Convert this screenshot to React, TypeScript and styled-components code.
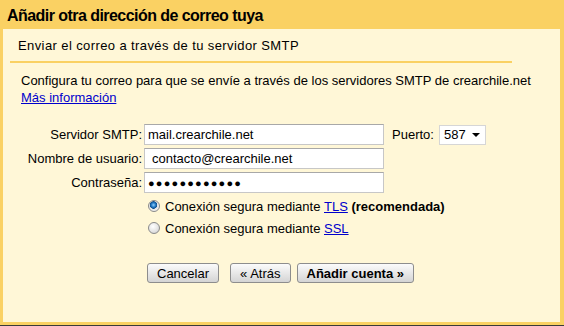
import styled, { createGlobalStyle } from "styled-components";

const Global = createGlobalStyle`
  html, body {
    margin: 0;
    padding: 0;
    background: #fff;
  }
  body {
    font-family: "Liberation Sans", Arial, sans-serif;
    font-size: 13px;
    color: #000;
  }
`;

const fields = [
  { label: "Servidor SMTP:", value: "mail.crearchile.net", indent: 3 },
  { label: "Nombre de usuario:", value: "contacto@crearchile.net", indent: 7 },
  { label: "Contraseña:", value: "●●●●●●●●●●●●", indent: 3, secret: true },
];

const App = () => {
  return (
    <Frame>
      <Global />
      <Title>Añadir otra dirección de correo tuya</Title>
      <Panel>
        <SubHeader>
          <SubTitle>Enviar el correo a través de tu servidor SMTP</SubTitle>
        </SubHeader>

        <Intro>
          Configura tu correo para que se envíe a través de los servidores SMTP de crearchile.net
          <br />
          <Link href="#">Más información</Link>
        </Intro>

        <Form>
          {fields.map((f, i) => (
            <Row key={f.label}>
              <Label>{f.label}</Label>
              <Field $indent={f.indent} $secret={f.secret}>
                {f.value}
              </Field>
              {i === 0 && (
                <Port>
                  <span>Puerto:</span>
                  <Select>
                    587
                    <svg width="8" height="4" viewBox="0 0 8 4">
                      <path d="M0 0h8L4 4z" fill="#000" />
                    </svg>
                  </Select>
                </Port>
              )}
            </Row>
          ))}
        </Form>

        <Options>
          <Option>
            <Radio $checked />
            Conexión segura mediante&nbsp;<Link href="#">TLS</Link>&nbsp;<b>(recomendada)</b>
          </Option>
          <Option>
            <Radio />
            Conexión segura mediante&nbsp;<Link href="#">SSL</Link>
          </Option>
        </Options>

        <Buttons>
          <Button>Cancelar</Button>
          <Button $gap={11}>« Atrás</Button>
          <Button $gap={6} $bold>Añadir cuenta »</Button>
        </Buttons>
      </Panel>
    </Frame>
  );
};

export default App;

// estilos
const Frame = styled.div`
  width: 564px;
  height: 326px;
  box-sizing: border-box;
  background: #fad163;
  padding: 0 4px 3px 3px;
  border-bottom: 1px solid #3a3a3a;
  display: flex;
  flex-direction: column;
`;

const Title = styled.h1`
  margin: 0;
  height: 29px;
  line-height: 32px;
  padding-left: 4px;
  font-size: 16px;
  font-weight: 700;
  letter-spacing: -0.55px;
  color: #000;
`;

const Panel = styled.div`
  flex: 1;
  background: #fff7d7;
  display: flex;
  flex-direction: column;
`;

const SubHeader = styled.div`
  margin: 0 48px 0 7px;
  border-bottom: 2px solid #fad163;
  padding: 9px 0 8px 8px;
`;

const SubTitle = styled.h2`
  margin: 0;
  font-size: 13px;
  font-weight: 400;
  letter-spacing: 0.4px;
  line-height: 15px;
`;

const Intro = styled.p`
  margin: 9px 0 0 18px;
  line-height: 17px;
`;

const Link = styled.a`
  color: #0000cc;
  text-decoration: underline;
`;

const Form = styled.div`
  margin-top: 18px;
  display: flex;
  flex-direction: column;
  gap: 3px;
`;

const Row = styled.div`
  display: flex;
  align-items: center;
  height: 21px;
`;

const Label = styled.label`
  width: 139px;
  text-align: right;
  padding-right: 2px;
`;

const Field = styled.div<{ $indent: number; $secret?: boolean }>`
  width: 240px;
  height: 21px;
  box-sizing: border-box;
  background: #fff;
  border: 1px solid #c7c7c7;
  border-top-color: #a8a8a8;
  padding-left: ${({ $indent }) => $indent}px;
  display: flex;
  align-items: center;
  font-size: ${({ $secret }) => ($secret ? "11px" : "13px")};
  letter-spacing: ${({ $secret }) => ($secret ? "1.2px" : "0")};
`;

const Port = styled.div`
  display: flex;
  align-items: center;
  gap: 5px;
  margin-left: 8px;
`;

const Select = styled.div`
  width: 47px;
  height: 20px;
  box-sizing: border-box;
  background: #fff;
  border: 1px solid #d6d6d6;
  display: flex;
  align-items: center;
  justify-content: space-between;
  padding: 0 5px 0 4px;
`;

const Options = styled.div`
  margin: 5px 0 0 145px;
  display: flex;
  flex-direction: column;
  gap: 6px;
`;

const Option = styled.div`
  display: flex;
  align-items: center;
  height: 16px;
`;

const Radio = styled.span<{ $checked?: boolean }>`
  width: 12px;
  height: 12px;
  border-radius: 50%;
  margin-right: 5px;
  box-sizing: border-box;
  border: 1px solid #8a8a8a;
  background: ${({ $checked }) =>
    $checked
      ? "radial-gradient(circle at 45% 40%, #8fd0ff 0, #2a7ec8 2px, #0b4f8f 3.5px, #e4e4e4 4px, #fff 100%)"
      : "radial-gradient(circle at 40% 35%, #fff 0, #e2e2e2 60%, #c6c6c6 100%)"};
`;

const Buttons = styled.div`
  margin: 27px 0 0 144px;
  display: flex;
  align-items: center;
`;

const Button = styled.button<{ $gap?: number; $bold?: boolean }>`
  margin-left: ${({ $gap }) => $gap ?? 0}px;
  height: 20px;
  padding: 0 9px;
  font-family: "Liberation Sans", Arial, sans-serif;
  font-size: 13px;
  font-weight: ${({ $bold }) => ($bold ? 700 : 400)};
  color: #000;
  border: 1px solid #8d8d8d;
  border-radius: 3px;
  background: linear-gradient(#fbfbfb, #e6e6e6 55%, #d4d4d4);
  cursor: pointer;
`;
